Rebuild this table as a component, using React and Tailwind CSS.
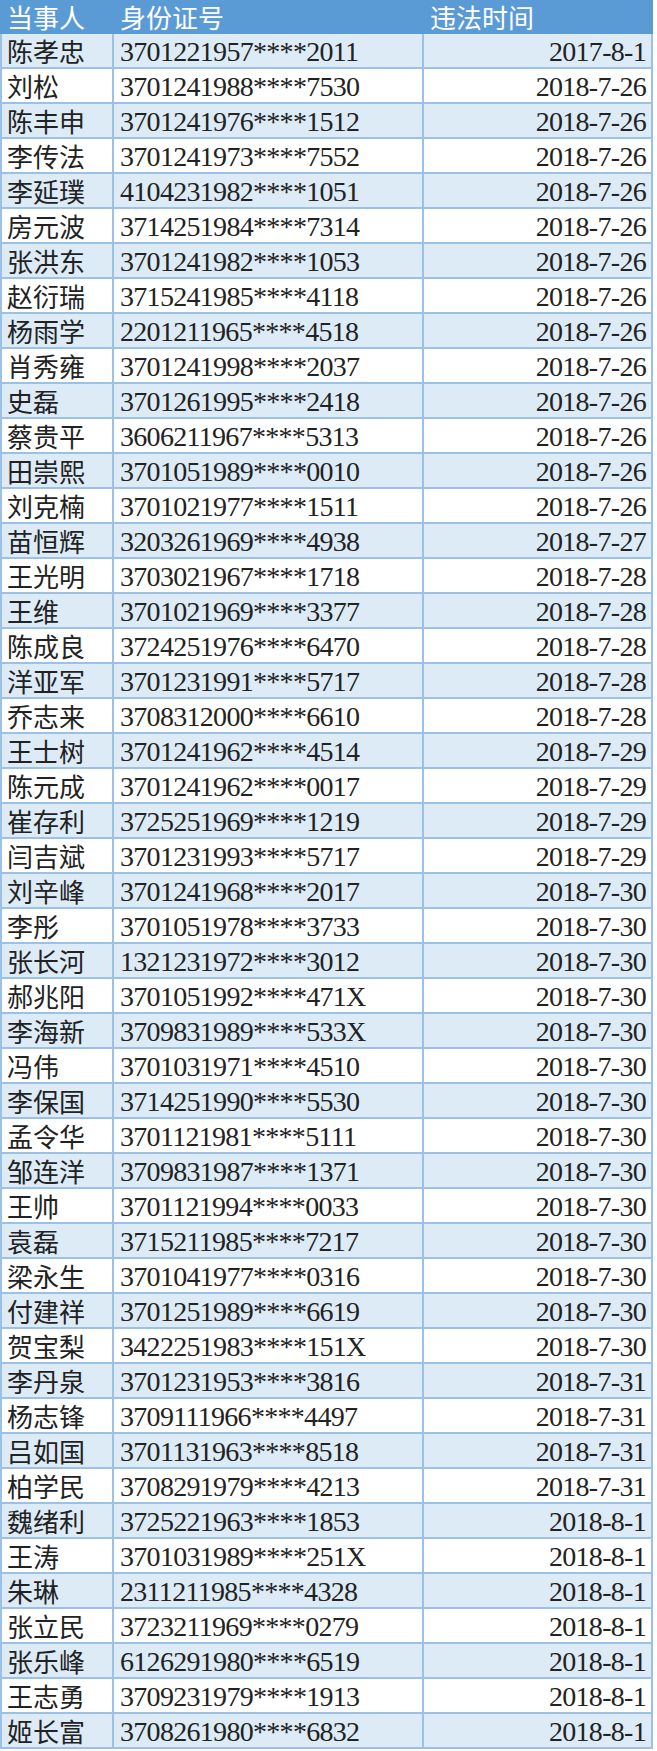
const rows = [
  ["陈孝忠", "3701221957****2011", "2017-8-1"],
  ["刘松", "3701241988****7530", "2018-7-26"],
  ["陈丰申", "3701241976****1512", "2018-7-26"],
  ["李传法", "3701241973****7552", "2018-7-26"],
  ["李延璞", "4104231982****1051", "2018-7-26"],
  ["房元波", "3714251984****7314", "2018-7-26"],
  ["张洪东", "3701241982****1053", "2018-7-26"],
  ["赵衍瑞", "3715241985****4118", "2018-7-26"],
  ["杨雨学", "2201211965****4518", "2018-7-26"],
  ["肖秀雍", "3701241998****2037", "2018-7-26"],
  ["史磊", "3701261995****2418", "2018-7-26"],
  ["蔡贵平", "3606211967****5313", "2018-7-26"],
  ["田崇熙", "3701051989****0010", "2018-7-26"],
  ["刘克楠", "3701021977****1511", "2018-7-26"],
  ["苗恒辉", "3203261969****4938", "2018-7-27"],
  ["王光明", "3703021967****1718", "2018-7-28"],
  ["王维", "3701021969****3377", "2018-7-28"],
  ["陈成良", "3724251976****6470", "2018-7-28"],
  ["洋亚军", "3701231991****5717", "2018-7-28"],
  ["乔志来", "3708312000****6610", "2018-7-28"],
  ["王士树", "3701241962****4514", "2018-7-29"],
  ["陈元成", "3701241962****0017", "2018-7-29"],
  ["崔存利", "3725251969****1219", "2018-7-29"],
  ["闫吉斌", "3701231993****5717", "2018-7-29"],
  ["刘辛峰", "3701241968****2017", "2018-7-30"],
  ["李彤", "3701051978****3733", "2018-7-30"],
  ["张长河", "1321231972****3012", "2018-7-30"],
  ["郝兆阳", "3701051992****471X", "2018-7-30"],
  ["李海新", "3709831989****533X", "2018-7-30"],
  ["冯伟", "3701031971****4510", "2018-7-30"],
  ["李保国", "3714251990****5530", "2018-7-30"],
  ["孟令华", "3701121981****5111", "2018-7-30"],
  ["邹连洋", "3709831987****1371", "2018-7-30"],
  ["王帅", "3701121994****0033", "2018-7-30"],
  ["袁磊", "3715211985****7217", "2018-7-30"],
  ["梁永生", "3701041977****0316", "2018-7-30"],
  ["付建祥", "3701251989****6619", "2018-7-30"],
  ["贺宝梨", "3422251983****151X", "2018-7-30"],
  ["李丹泉", "3701231953****3816", "2018-7-31"],
  ["杨志锋", "3709111966****4497", "2018-7-31"],
  ["吕如国", "3701131963****8518", "2018-7-31"],
  ["柏学民", "3708291979****4213", "2018-7-31"],
  ["魏绪利", "3725221963****1853", "2018-8-1"],
  ["王涛", "3701031989****251X", "2018-8-1"],
  ["朱琳", "2311211985****4328", "2018-8-1"],
  ["张立民", "3723211969****0279", "2018-8-1"],
  ["张乐峰", "6126291980****6519", "2018-8-1"],
  ["王志勇", "3709231979****1913", "2018-8-1"],
  ["姬长富", "3708261980****6832", "2018-8-1"],
];

const cjk = "font-['Noto_Sans_CJK_SC','Noto_Sans',sans-serif]";
const serif = "font-['Liberation_Serif','Noto_Sans_CJK_SC',serif]";

export default function App() {
  return (
    <div className="w-[657px] bg-white">
      <div className="w-[653px]">
        {/* header */}
        <div className={`flex h-[34px] bg-[#5B9BD5] text-white text-[26px] leading-none ${cjk}`}>
          <div className="w-[114px] pl-[7px] flex items-center">当事人</div>
          <div className="w-[310px] pl-[6px] flex items-center">身份证号</div>
          <div className="flex-1 pl-[6px] flex items-center">违法时间</div>
        </div>

        {rows.map(([name, id, date], i) => (
          <div
            key={i}
            className={`flex h-[35px] border-b-2 border-l-2 border-[#9BC2E6] text-[#222] ${
              i % 2 === 0 ? "bg-[#DDEBF7]" : "bg-white"
            }`}
          >
            <div className={`w-[112px] pl-[5px] flex items-center border-r-2 border-[#9BC2E6] text-[26px] leading-none ${cjk}`}>
              {name}
            </div>
            <div className={`w-[310px] pl-[6px] pt-[3px] flex items-center border-r-2 border-[#9BC2E6] text-[28px] tracking-[-0.7px] leading-none ${serif}`}>
              {id}
            </div>
            <div className={`flex-1 pr-[5px] pt-[3px] flex items-center justify-end border-r-2 border-[#9BC2E6] text-[28px] tracking-[-0.7px] leading-none ${serif}`}>
              {date}
            </div>
          </div>
        ))}
      </div>
    </div>
  );
}
